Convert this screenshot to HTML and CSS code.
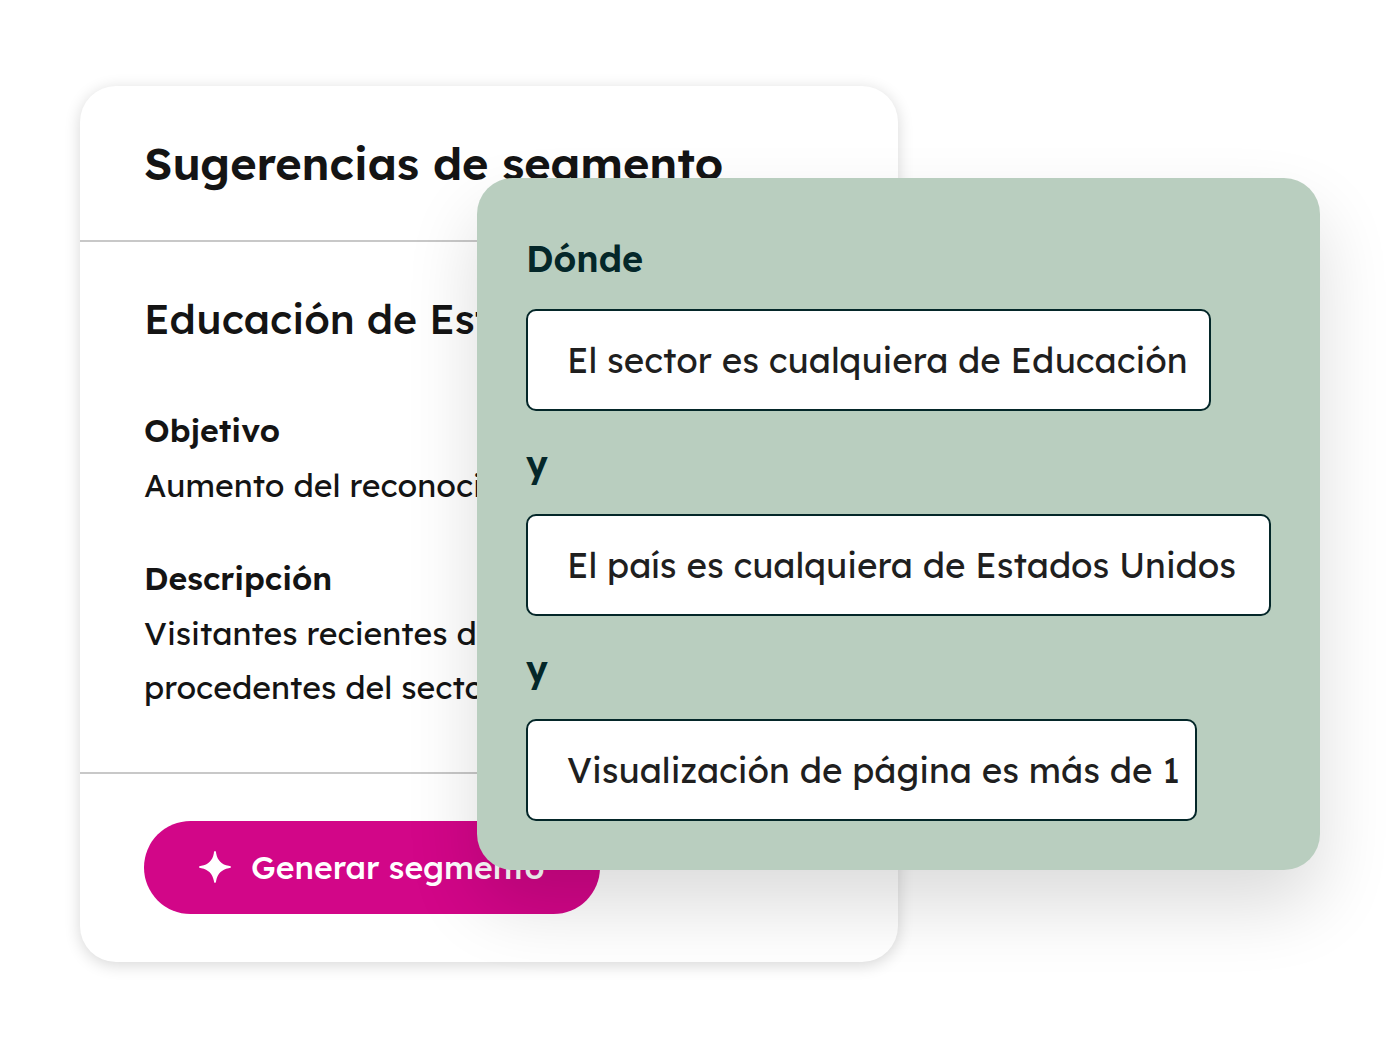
FILE: index.html
```html
<!DOCTYPE html>
<html lang="es">
<head>
    <meta charset="UTF-8">
    <meta name="viewport" content="width=device-width, initial-scale=1.0">
    <title>Sugerencias de segmento</title>
    <link rel="stylesheet" href="styles.css">
</head>
<body>

    <main class="stage">

        <!-- Suggestion card -->
        <section class="card">
            <header class="card-header">
                <h1>Sugerencias de segmento</h1>
            </header>

            <div class="card-body">
                <h2>Educación de Estados Unidos</h2>

                <h3>Objetivo</h3>
                <p>Aumento del reconocimiento</p>

                <h3>Descripción</h3>
                <p>Visitantes recientes de EE. UU.<br>procedentes del sector educativo</p>
            </div>

            <footer class="card-footer">
                <button type="button" class="button">
                    <svg class="spark" viewBox="0 0 32 32" aria-hidden="true">
                        <path d="M16 0C16.7 0 17 .8 17.2 2.4C18.4 9.2 22.8 13.6 29.6 14.8C31.2 15 32 15.3 32 16C32 16.7 31.2 17 29.6 17.2C22.8 18.4 18.4 22.8 17.2 29.6C17 31.2 16.7 32 16 32C15.3 32 15 31.2 14.8 29.6C13.6 22.8 9.2 18.4 2.4 17.2C.8 17 0 16.7 0 16C0 15.3 .8 15 2.4 14.8C9.2 13.6 13.6 9.2 14.8 2.4C15 .8 15.3 0 16 0Z"/>
                    </svg>
                    Generar segmento
                </button>
            </footer>
        </section>

        <!-- Conditions panel -->
        <section class="panel">
            <h2 class="join">Dónde</h2>
            <div class="rule rule-sector">El sector es cualquiera de Educación</div>
            <div class="join">y</div>
            <div class="rule">El país es cualquiera de Estados Unidos</div>
            <div class="join">y</div>
            <div class="rule rule-page">Visualización de página es más de 1</div>
        </section>

    </main>

</body>
</html>
```
FILE: styles.css
```css
/* General Style */
* {
    box-sizing: border-box;
}
body {
    font-family: "Lexend Deca", Lexend, Inter, sans-serif;
    margin: 0;
    background-color: #fff;
    color: #141414;
}
h1, h2, h3, p {
    margin: 0;
}

/* Card and panel share the middle column, so the panel overlaps the card */
.stage {
    display: grid;
    grid-template-columns: minmax(0, 397fr) minmax(0, 421fr) minmax(0, 422fr);
    align-items: start;
    padding: 86px 80px;
}

/* Suggestion card */
.card {
    grid-area: 1 / 1 / 2 / 3;
    background-color: #fff;
    border-radius: 36px;
    box-shadow: 0 3px 16px rgba(0, 0, 0, 0.16);
    white-space: nowrap;
}
.card-header {
    padding: 48px 64px;
    border-bottom: 2px solid #c8c8c8;
}
.card-header h1 {
    font-size: 45px;
    line-height: 58px;
    font-weight: 600;
}
.card-body {
    padding: 50px 64px 58px;
    border-bottom: 2px solid #c8c8c8;
}
.card-body h2 {
    font-size: 41px;
    line-height: 54px;
    font-weight: 500;
}
.card-body h3 {
    margin-top: 38px;
    font-size: 32px;
    line-height: 56px;
    font-weight: 600;
}
.card-body h2 + h3 {
    margin-top: 56px;
}
.card-body p {
    font-size: 32px;
    line-height: 54px;
}
.card-footer {
    padding: 47px 64px 48px;
}

/* Button */
.button {
    display: flex;
    align-items: center;
    gap: 20px;
    width: 456px;
    height: 93px;
    padding: 0 55px 2px;
    border: none;
    border-radius: 47px;
    background-color: #d20688;
    color: #fff;
    font-family: inherit;
    font-size: 32px;
    font-weight: 500;
    white-space: nowrap;
    cursor: pointer;
}
.spark {
    flex: none;
    width: 32px;
    height: 32px;
    fill: #fff;
}

/* Conditions panel */
.panel {
    grid-area: 1 / 2 / 2 / 4;
    margin-top: 92px;
    padding: 49px;
    border-radius: 36px;
    background-color: #b9cebf;
    box-shadow: 0 36px 72px rgba(0, 0, 0, 0.14);
}
.join {
    padding: 30px 0 27px;
    font-size: 36px;
    line-height: 46px;
    font-weight: 600;
    color: #042729;
}
h2.join {
    padding-top: 9px;
}
.rule {
    padding: 0 39px;
    border: 2px solid #042729;
    border-radius: 10px;
    background-color: #fff;
    color: #1f1f1f;
    font-size: 35px;
    line-height: 98px;
    white-space: nowrap;
}
.rule-sector {
    width: 92%;
}
.rule-page {
    width: 90%;
}
```
